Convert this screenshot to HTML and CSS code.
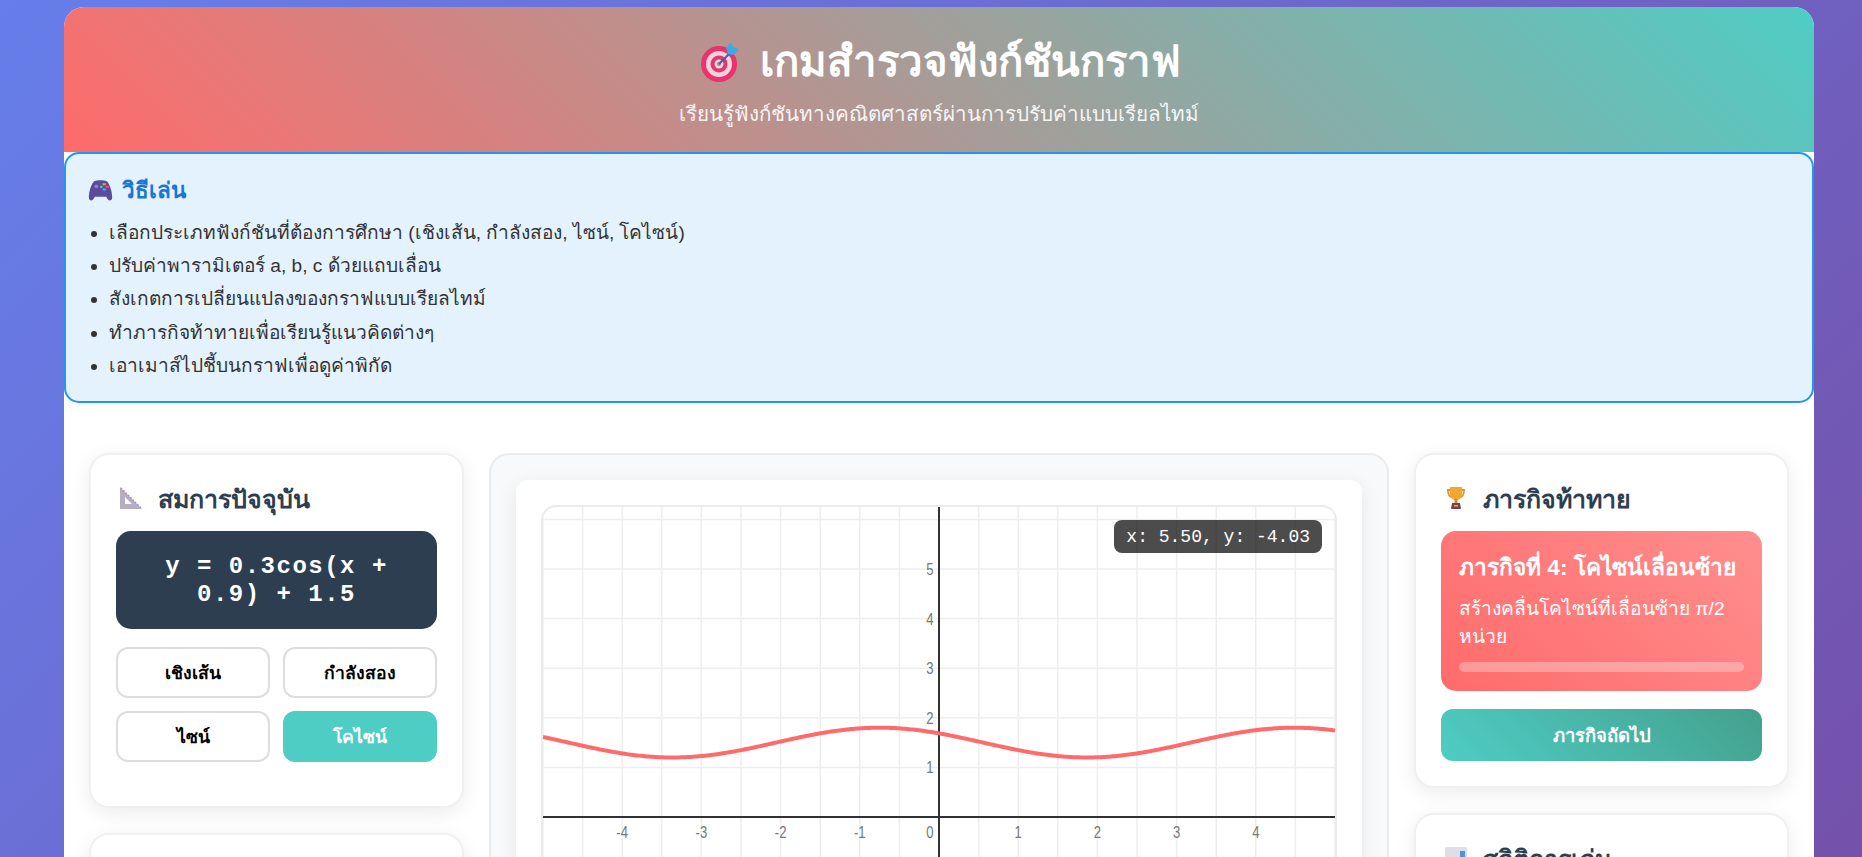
FILE: index.html
```html
<!DOCTYPE html>
<html lang="th">
<head>
  <meta charset="UTF-8">
  <title>เกมสำรวจฟังก์ชันกราฟ</title>
  <meta name="viewport" content="width=device-width, initial-scale=1.0">
  <link rel="stylesheet" href="styles.css">
</head>
<body>
  <div class="container">
    <!-- Header -->
    <header class="header">
      <h1 class="title">
        <svg class="title-icon" viewBox="0 0 44 44" width="44" height="44" aria-hidden="true">
          <circle cx="21" cy="24" r="18" fill="#e8336c"/>
          <circle cx="21" cy="24" r="13" fill="#f2d3dd"/>
          <circle cx="21" cy="24" r="8.5" fill="#e8336c"/>
          <circle cx="21" cy="24" r="4.5" fill="#f2d3dd"/>
          <circle cx="21" cy="24" r="2" fill="#9a8f96"/>
          <path d="M21 24 L34 11" stroke="#2d6fa8" stroke-width="2.2"/>
          <path d="M28 8 L33 2 L35 7 L41 9 L36 15 L30 14 Z" fill="#43a7e6"/>
        </svg>
        <span>เกมสำรวจฟังก์ชันกราฟ</span>
      </h1>
      <p class="subtitle">เรียนรู้ฟังก์ชันทางคณิตศาสตร์ผ่านการปรับค่าแบบเรียลไทม์</p>
    </header>

    <!-- How to play -->
    <section class="info-box">
      <h3 class="info-title">
        <svg viewBox="0 0 24 20" width="25" height="21" aria-hidden="true">
          <path d="M6 1 C9 0 15 0 18 1 C21 3 24 14 23 18 C22 20.5 19 20 17.5 16 L6.5 16 C5 20 2 20.5 1 18 C0 14 3 3 6 1 Z" fill="#5b4a9e"/>
          <circle cx="8" cy="6" r="1.8" fill="#8f80c8"/>
          <rect x="14" y="3" width="3" height="2" fill="#e8a33c"/>
          <rect x="17" y="5.5" width="3" height="2" fill="#e0527a"/>
          <rect x="14" y="8" width="3" height="2" fill="#4db0e8"/>
          <rect x="11.5" y="5.5" width="2.5" height="2" fill="#5cc98a"/>
        </svg>
        <span>วิธีเล่น</span>
      </h3>
      <ul class="info-list">
        <li>เลือกประเภทฟังก์ชันที่ต้องการศึกษา (เชิงเส้น, กำลังสอง, ไซน์, โคไซน์)</li>
        <li>ปรับค่าพารามิเตอร์ a, b, c ด้วยแถบเลื่อน</li>
        <li>สังเกตการเปลี่ยนแปลงของกราฟแบบเรียลไทม์</li>
        <li>ทำภารกิจท้าทายเพื่อเรียนรู้แนวคิดต่างๆ</li>
        <li>เอาเมาส์ไปชี้บนกราฟเพื่อดูค่าพิกัด</li>
      </ul>
    </section>

    <main class="main-grid">
      <!-- Left column -->
      <div class="column">
        <div class="card">
          <h2 class="card-title">
            <svg viewBox="0 0 24 24" width="24" height="24" aria-hidden="true">
              <path fill-rule="evenodd" d="M1 0 L23 22 L1 22 Z M6 10 L6 17 L13 17 Z" fill="#b5adc0"/>
              <path d="M2 1 L22 21" stroke="#a583dc" stroke-width="1.4" stroke-dasharray="1.5 1.8"/>
            </svg>
            <span>สมการปัจจุบัน</span>
          </h2>
          <div class="equation">y = 0.3cos(x + 0.9) + 1.5</div>
          <div class="type-buttons">
            <button class="type-btn">เชิงเส้น</button>
            <button class="type-btn">กำลังสอง</button>
            <button class="type-btn">ไซน์</button>
            <button class="type-btn active">โคไซน์</button>
          </div>
        </div>
        <div class="card card-sliders"></div>
      </div>

      <!-- Graph -->
      <div class="graph-panel">
        <div class="graph-inner">
          <div class="graph-canvas">
            <svg id="graph" class="graph-svg" viewBox="0 0 792 620" width="792" height="620"></svg>
            <div class="coords">x: 5.50, y: -4.03</div>
          </div>
        </div>
      </div>

      <!-- Right column -->
      <div class="column">
        <div class="card">
          <h2 class="card-title">
            <svg viewBox="0 1 24 24" width="24" height="24" aria-hidden="true">
              <path d="M3 3 H7 V5 H5 C5 8 6 10 8 10 V12 C4 12 3 7 3 3 Z M21 3 H17 V5 H19 C19 8 18 10 16 10 V12 C20 12 21 7 21 3 Z" fill="#e0952a"/>
              <path d="M6 1 H18 V8 C18 12 15 14 12 14 C9 14 6 12 6 8 Z" fill="#f2a52f"/>
              <rect x="10.5" y="13" width="3" height="5" fill="#d98a25"/>
              <path d="M8 17 H16 L17 23 H7 Z" fill="#7b3f55"/>
              <rect x="10" y="19" width="4" height="1.5" fill="#f2b33c"/>
            </svg>
            <span>ภารกิจท้าทาย</span>
          </h2>
          <div class="mission">
            <div class="mission-title">ภารกิจที่ 4: โคไซน์เลื่อนซ้าย</div>
            <div class="mission-desc">สร้างคลื่นโคไซน์ที่เลื่อนซ้าย π/2 หน่วย</div>
            <div class="progress"></div>
          </div>
          <button class="next-btn">ภารกิจถัดไป</button>
        </div>
        <div class="card">
          <h2 class="card-title">
            <svg viewBox="0 0 24 24" width="24" height="24" aria-hidden="true">
              <rect x="1" y="0" width="22" height="23" rx="2" fill="#dfdde6"/>
              <rect x="3" y="10" width="5" height="13" fill="#9ad65f"/>
              <rect x="9.5" y="16" width="5" height="7" fill="#e25c8a"/>
              <rect x="16" y="4" width="5" height="19" fill="#3d9be0"/>
            </svg>
            <span>สถิติการเล่น</span>
          </h2>
        </div>
      </div>
    </main>
  </div>

  <script src="graph.js"></script>
</body>
</html>
```

FILE: styles.css
```css
* {
  box-sizing: border-box;
}

body {
  margin: 0;
  min-height: 100vh;
  font-family: "Liberation Sans", sans-serif;
  background: linear-gradient(135deg, #667eea 0%, #764ba2 100%);
  color: #333;
  padding: 7px 48px 20px 64px;
}

.container {
  background: #fff;
  border-radius: 20px;
  overflow: hidden;
}

/* Header */
.header {
  height: 145px;
  padding-top: 25px;
  text-align: center;
  color: #fff;
  background: linear-gradient(45deg, #ff6b6b, #4ecdc4);
}

.title {
  display: flex;
  justify-content: center;
  align-items: center;
  gap: 18px;
  margin: 0 0 5px;
  font-size: 41.9px;
  line-height: 60px;
}

.subtitle {
  margin: 0;
  font-size: 20.6px;
  opacity: 0.9;
}

/* Info box */
.info-box {
  height: 251px;
  padding: 18px 20px;
  background: #e3f2fd;
  border: 2px solid #2196f3;
  border-radius: 15px;
}

.info-title {
  display: flex;
  align-items: center;
  gap: 9px;
  margin: 0 0 8px 2px;
  font-size: 22.4px;
  color: #1976d2;
}

.info-list {
  margin: 0;
  padding-left: 23px;
  font-size: 19.1px;
  line-height: 33.2px;
}

/* Layout */
.main-grid {
  display: grid;
  grid-template-columns: 375px 900px 375px;
  gap: 25px;
  padding: 50px 25px 25px;
}

.column {
  display: flex;
  flex-direction: column;
  gap: 25px;
}

.card {
  padding: 25px;
  background: #fff;
  border: 2px solid #f0f0f0;
  border-radius: 20px;
  box-shadow: 0 5px 20px rgba(0, 0, 0, 0.08);
}

.card-sliders {
  height: 300px;
}

.card-title {
  display: flex;
  align-items: center;
  gap: 15px;
  height: 38px;
  margin: 0 0 13px;
  font-size: 25px;
  color: #2c3e50;
}

.card-title svg {
  margin-left: 3px;
  overflow: visible;
}

.equation {
  padding: 22px 20px 20px;
  text-align: center;
  color: #fff;
  background: #2c3e50;
  border-radius: 15px;
  font-family: "Liberation Mono", monospace;
  font-size: 24px;
  line-height: 28px;
  letter-spacing: 1.5px;
  font-weight: bold;
  margin-bottom: 18px;
}

.type-buttons {
  display: grid;
  grid-template-columns: 1fr 1fr;
  gap: 13px;
  margin-bottom: 19px;
}

.type-btn {
  height: 51px;
  background: #fff;
  color: #000;
  border: 2px solid #ddd;
  border-radius: 12px;
  font-family: inherit;
  font-size: 17.6px;
  font-weight: bold;
}

.type-btn.active {
  background: #4ecdc4;
  border-color: #4ecdc4;
  color: #fff;
}

/* Graph */
.graph-panel {
  padding: 25px;
  background: #f8f9fa;
  border: 2px solid #e9ecef;
  border-radius: 20px;
}

.graph-inner {
  padding: 25px;
  background: #fff;
  border-radius: 12px;
  box-shadow: 0 5px 20px rgba(0, 0, 0, 0.08);
}

.graph-canvas {
  position: relative;
  border: 2px solid #e9ecef;
  border-radius: 15px;
  overflow: hidden;
}

.graph-svg {
  display: block;
}

.tick {
  font-family: "Liberation Sans", sans-serif;
  font-size: 16px;
  fill: #777;
}

.coords {
  position: absolute;
  top: 13px;
  right: 13px;
  padding: 6.5px 12px;
  color: #fff;
  background: rgba(0, 0, 0, 0.7);
  border-radius: 8px;
  font-family: "Liberation Mono", monospace;
  font-size: 18px;
}

/* Mission */
.mission {
  padding: 18px 18px 19px;
  color: #fff;
  background: linear-gradient(45deg, #ff6b6b, #ff8e8e);
  border-radius: 15px;
  margin-bottom: 18px;
}

.mission-title {
  font-size: 22.7px;
  line-height: 36px;
  font-weight: bold;
  margin-bottom: 10px;
}

.mission-desc {
  font-size: 19.2px;
  line-height: 28px;
}

.progress {
  height: 10px;
  margin-top: 11px;
  background: rgba(255, 255, 255, 0.3);
  border-radius: 5px;
}

.next-btn {
  display: block;
  width: 100%;
  height: 52px;
  color: #fff;
  background: linear-gradient(45deg, #4ecdc4, #44a08d);
  border: none;
  border-radius: 12px;
  font-family: inherit;
  font-size: 18.4px;
  font-weight: bold;
}
```

FILE: graph.js
```js
// Grid, axes and curve of y = 0.3cos(1.2x + 0.9) + 1.5
const svg = document.getElementById("graph");
const W = 792, H = 620;
const unitX = 79.2, unitY = 49.6;
const originX = 396, originY = 310;
const NS = "http://www.w3.org/2000/svg";

function add(tag, attrs, text) {
  const el = document.createElementNS(NS, tag);
  for (const k in attrs) el.setAttribute(k, attrs[k]);
  if (text !== undefined) el.textContent = text;
  svg.appendChild(el);
  return el;
}

function tick(x, y, text) {
  add("text", {
    transform: "translate(" + x + " " + y + ") scale(0.82 1)",
    "text-anchor": "middle",
    class: "tick"
  }, text);
}

// Grid
for (let i = -10; i <= 10; i++) {
  const x = originX + i * unitX / 2;
  add("line", { x1: x, y1: 0, x2: x, y2: H, stroke: "#eeeeee", "stroke-width": 1.5 });
}
for (let i = -6; i <= 6; i++) {
  const y = originY + i * unitY;
  add("line", { x1: 0, y1: y, x2: W, y2: y, stroke: "#eeeeee", "stroke-width": 1.5 });
}

// Axes
add("line", { x1: 0, y1: originY, x2: W, y2: originY, stroke: "#333", "stroke-width": 2 });
add("line", { x1: originX, y1: 0, x2: originX, y2: H, stroke: "#333", "stroke-width": 2 });

// Labels
for (let i = -4; i <= 4; i++) {
  if (i !== 0) tick(originX + i * unitX, originY + 21, i);
}
tick(originX - 9, originY + 21, 0);
for (let i = -5; i <= 5; i++) {
  if (i !== 0) tick(originX - 9, originY - i * unitY + 6, i);
}

// Curve
let d = "";
for (let px = 0; px <= W; px += 2) {
  const t = (px - originX) / unitX;
  const val = 0.3 * Math.cos(1.2 * t + 0.9) + 1.5;
  d += (d ? "L" : "M") + px + " " + (originY - val * unitY).toFixed(2);
}
add("path", { d, fill: "none", stroke: "#ff6b6b", "stroke-width": 4 });
```
